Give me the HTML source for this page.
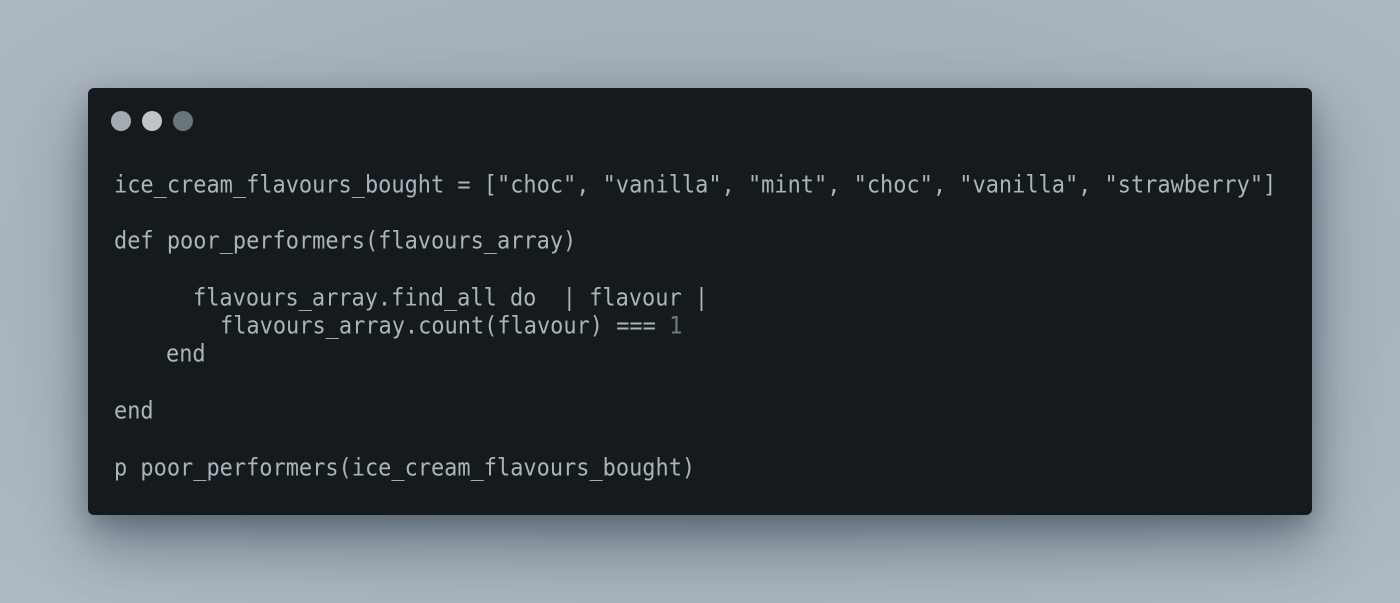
<!DOCTYPE html>
<html><head><meta charset="utf-8">
<style>
html,body{margin:0;padding:0;}
body{width:1400px;height:603px;overflow:hidden;background:radial-gradient(ellipse at 50% 45%,#9aa6b0 0%,#a6b1bb 60%,#b0bac3 100%);position:relative;}
.card{position:absolute;left:88px;top:88px;width:1224px;height:427px;background:#151a1c;border-radius:6px;box-shadow:0 30px 60px rgba(40,55,70,0.45),0 10px 25px rgba(40,55,70,0.3);}
.dot{position:absolute;top:111px;width:20px;height:20px;border-radius:50%;}
.l{position:absolute;font-family:"DejaVu Sans Mono","Liberation Mono",monospace;font-size:21.95px;color:#a9b4bc;white-space:pre;line-height:28px;transform:scaleY(1.08);transform-origin:0 50%;}
.n{color:#6f7c84;}
</style></head><body>
<div class="card"></div>
<div class="dot" style="left:111px;background:#a4acb3"></div>
<div class="dot" style="left:142px;background:#c0c5c9"></div>
<div class="dot" style="left:173px;background:#6b767b"></div>
<div class="l" style="left:114px;top:172px">ice_cream_flavours_bought = ["choc", "vanilla", "mint", "choc", "vanilla", "strawberry"]</div>
<div class="l" style="left:114px;top:228px">def poor_performers(flavours_array)</div>
<div class="l" style="left:193px;top:285px">flavours_array.find_all do  | flavour |</div>
<div class="l" style="left:220px;top:313px">flavours_array.count(flavour) === <span class="n">1</span></div>
<div class="l" style="left:166px;top:341px">end</div>
<div class="l" style="left:114px;top:398px">end</div>
<div class="l" style="left:114px;top:455px">p poor_performers(ice_cream_flavours_bought)</div>
</body></html>
